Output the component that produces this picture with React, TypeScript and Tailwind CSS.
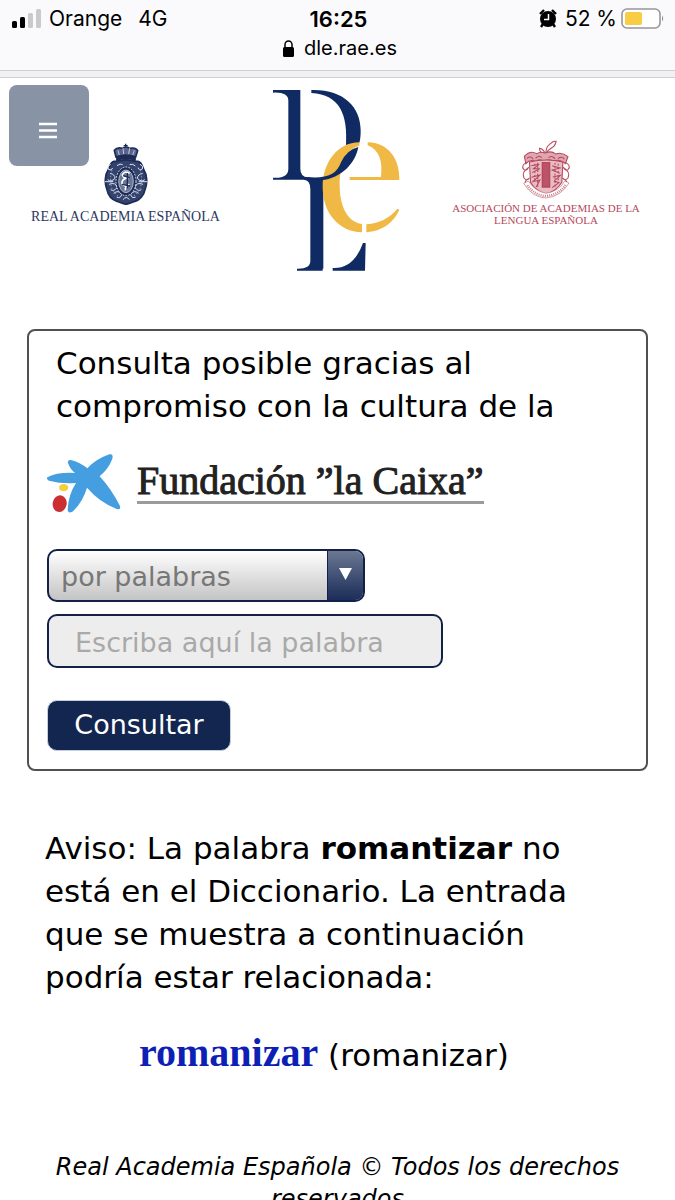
import { useState } from "react";

function StatusBar() {
  return (
    <div className="bg-[#fafafc] font-['Inter',sans-serif] text-black">
      <div className="grid h-9 grid-cols-3 items-center pl-3 pr-[10px] pt-[2px]">
        <div className="flex items-center">
          <svg className="mr-[7px]" width="30" height="20" viewBox="0 0 30 20" aria-hidden="true">
            <rect x="0" y="12" width="5" height="7" rx="1.5" fill="#000" />
            <rect x="8" y="8" width="5" height="11" rx="1.5" fill="#000" />
            <rect x="16" y="4" width="5" height="15" rx="1.5" fill="#cacacb" />
            <rect x="24" y="0" width="5" height="19" rx="1.5" fill="#cacacb" />
          </svg>
          <span className="text-[21px]">Orange</span>
          <span className="ml-4 text-[21px]">4G</span>
        </div>
        <span className="text-center text-[22px] font-semibold">16:25</span>
        <div className="flex items-center justify-end">
          <svg className="mr-2" width="18" height="20" viewBox="0 0 18 20" aria-hidden="true">
            <path d="M1 5 5 1M17 5 13 1M4 15l-2 3M14 15l2 3" stroke="#000" strokeWidth="2.4" />
            <circle cx="9" cy="10" r="8" fill="#000" />
            <path d="M9.500 5v5.500H5" stroke="#fff" strokeWidth="1.500" fill="none" />
          </svg>
          <span className="text-[21px]">52 %</span>
          <svg className="ml-1" width="44" height="22" viewBox="0 0 44 22" aria-hidden="true">
            <rect x="1" y="1" width="38" height="19" rx="5" fill="#fff" stroke="#97979b" strokeWidth="1.600" />
            <rect x="4" y="4" width="17" height="13" rx="2" fill="#f8cd45" />
            <path d="M41 7.500q2.500 3 0 6z" fill="#97979b" />
          </svg>
        </div>
      </div>
      <div className="flex h-[34px] items-start justify-center pl-1">
        <svg className="mr-2 mt-[3px]" width="14" height="19" viewBox="0 0 14 19" aria-hidden="true">
          <rect x="1" y="8" width="11" height="10" rx="1.500" fill="#000" />
          <path d="M3 9V5.500a3.500 3.500 0 0 1 7 0V9" stroke="#000" strokeWidth="1.500" fill="none" />
        </svg>
        <span className="text-[20px] leading-6">dle.rae.es</span>
      </div>
      <div className="h-2 border-y border-[#cfcfd4] bg-[#f1f1f4]" />
    </div>
  );
}

function RaeEmblem() {
  return (
    <svg width="44" height="62" viewBox="0 0 132 186" fill="none" stroke="#1d2b57" aria-hidden="true">
      <path d="M65 2v14M59 8h12" strokeWidth="4" />
      <path d="M36 42 31 22q8-10 24-6 10-8 22 0 18-4 24 7l-6 19q-30-8-59 0z" fill="#56638a" strokeWidth="5" />
      <path d="M38 41q28-10 56 0v12q-28-7-56 0z" fill="#1d2b57" strokeWidth="3" />
      <path d="M46 36 42 22M59 33l-2-18M74 33l3-18M86 36l5-14" stroke="#fff" strokeWidth="2" />
      <path d="M66 51c14 0 22 5 36 4 12 2 14 18 18 27 10 14 10 40 4 55-4 21-18 35-31 38-10 5-19 6-27 9-8-3-17-4-27-9-15-4-27-18-31-38-6-16-6-41 4-55 4-9 6-24 18-27 14 1 22-4 36-4z" fill="#34436e" strokeWidth="5" />
      <g stroke="#dfe3ee" strokeWidth="3">
        <path d="M20 64q-12 5-7 15 9 6 13-4M108 64q12 4 7 14-10 6-13-4" />
        <path d="M18 91q15 3 15 15-12 13-22 4M116 91q-15 3-16 15 12 13 22 4" />
        <path d="M15 124q21-8 24 10-10 13-19 6M117 124q-20-8-24 10 10 13 19 6" />
        <path d="M29 151q15-12 24 4-4 13-15 7M104 151q-15-12-24 4 4 13 15 7" />
        <path d="M39 68q10-8 17-3M77 65q10-4 17 4M57 170q10-13 19 0M3 116h25M104 116h26" />
      </g>
      <ellipse cx="66" cy="115" rx="30" ry="43" fill="#1d2b57" stroke="#e5e8f1" strokeWidth="3" strokeDasharray="5 4" />
      <ellipse cx="66" cy="115" rx="22" ry="34" fill="#6b7799" stroke="#dde1ec" strokeWidth="2" />
      <path d="M77 91q-17-9-22 5 4 12 18 8-21 4-19 18 7 12 22 2-13 6-12 18" stroke="#fff" strokeWidth="5" />
      <path d="M70 90v46M57 98l20 6M54 124l24 5" strokeWidth="4" />
      <path d="M24 81q-8 24-1 54 8 18 24 27M109 81q7 25 0 54-9 18-25 27" stroke="#a2abc4" strokeWidth="3" strokeDasharray="4 5" />
    </svg>
  );
}

function AsaleEmblem() {
  return (
    <svg width="54" height="60" viewBox="0 0 150 180" preserveAspectRatio="none" fill="none" stroke="#b4485c" aria-hidden="true">
      <path d="M75 38q0-18 10-25 11-12 18-9-2 14-13 20-10 6-13 15M72 39q-5-12-15-14 0 12 10 15" strokeWidth="3" />
      <path d="M15 49q16-20 34-8 11-8 24-2 17-8 29 3 17-7 34 8l-7 21q-17-16-31-7-17-10-27 0-15-9-25 0-16-7-27 7z" fill="#dfa6b0" strokeWidth="3" />
      <path d="M29 66q46-12 93 0l-3 61q-13 23-44 38-31-15-43-38z" fill="#e9bcc4" strokeWidth="3" />
      <path d="M65 68h20v73H65z" fill="#bc5368" strokeWidth="4" />
      <g strokeWidth="3">
        <path d="M22 55q12-9 17 3M46 55q11-12 17-2M82 53q12-8 18 4M108 56q12-9 18 2" />
        <path d="M34 77l22-4-16 13h18L36 98M35 112l23-7-19 20 19-5-10 21M92 77l22 7-22 6 22 10M94 111l21-5-17 17 13 5-19 15" />
        <path d="M44 71v54M52 68v74M100 68v72M109 71v55" strokeDasharray="6 5" />
        <path d="M21 67Q5 76 13 88q10 5 13-5-20 14-12 31 9 10 14 1-17 8-7 22M129 67q16 9 8 21-10 5-13-5 20 14 12 31-9 10-14 1 17 8 7 22" />
      </g>
      <path d="M13 130q24 43 62 44 41-4 64-45l-12-6q-15 30-52 37-33-8-49-37z" fill="#fff" strokeWidth="1.500" />
      <path d="M23 136q22 31 52 32 34-3 54-33" stroke="#c98592" strokeWidth="7" strokeDasharray="3 3" />
    </svg>
  );
}

function DleLogo() {
  return (
    <svg className="h-[200px] w-[160px] shrink-0" viewBox="0 0 480 600" role="img" aria-label="DLE">
      <g fill="#102a63">
        <path d="M45 30H127V266Q127 291 150 292Q177 298 196 300V566H194V572H117V566Q157 567 157 543V327Q157 300 137 299H45V293Q91 296 91 266V62Q91 36 45 38Z" />
        <path d="M160 30C254 27 308 79 308 151C308 173 306 183 303 191L264 195C270 106 246 43 160 39Z" />
        <path d="M323 489L321 572H224V564Q287 567 315 489Z" />
      </g>
      <path d="M304 187C239 187 194 248 194 320C194 398 242 455 312 457V432C265 425 245 374 245 315C245 251 267 207 304 197Z" fill="#f0b945" />
      <path d="M301 201C292 250 251 294 190 301Q160 302 145 291C202 296 235 287 249 247Q267 209 301 201Z" fill="#102a63" />
      <path d="M329 187C390 188 426 236 424 300H275V291H369C374 244 365 210 329 196ZM325 433Q386 427 418 386L424 390Q395 451 325 457Z" fill="#f0b945" />
    </svg>
  );
}

function SiteHeader() {
  return (
    <header className="relative flex h-[251px] items-start justify-between pl-[30px] pr-[37px] pt-[2px] font-['Liberation_Serif',serif]">
      <button
        type="button"
        aria-label="Menú"
        className="absolute left-[9px] top-[7px] flex h-[81px] w-20 items-center justify-center rounded-lg bg-[#8993a6] pt-[10px]"
      >
        <svg width="20" height="17" viewBox="0 0 20 17" stroke="#fff" strokeWidth="2.600" aria-hidden="true">
          <path d="M0 2h18M0 8.500h18M0 15h18" />
        </svg>
      </button>
      <a href="#rae" className="mt-[63px] flex w-[191px] flex-col items-center text-[#2c375f]">
        <RaeEmblem />
        <span className="mt-[2px] whitespace-nowrap text-[14px] leading-5">REAL ACADEMIA ESPAÑOLA</span>
      </a>
      <a href="#dle">
        <DleLogo />
      </a>
      <a href="#asale" className="mt-[60px] flex w-[184px] flex-col items-center text-[#b4485c]">
        <AsaleEmblem />
        <span className="mt-[2px] whitespace-nowrap text-center text-[11px] leading-3">
          ASOCIACIÓN DE ACADEMIAS DE LA
          <br />
          LENGUA ESPAÑOLA
        </span>
      </a>
    </header>
  );
}

function CaixaLogo() {
  return (
    <div className="mt-[26px] flex h-[62px] items-start">
      <svg className="mr-4 shrink-0" width="74" height="60" viewBox="0 0 222 180" aria-hidden="true">
        <path
          d="M1 70Q32 54 84 57Q69 45 63 27Q61 16 74 19Q98 25 121 43Q145 16 187 1Q200 -2 196 14Q185 44 158 67Q193 105 219 156Q222 169 209 165Q158 145 120 101Q106 147 76 173Q62 180 62 166Q64 122 87 87Q44 90 6 80Q-3 75 1 70Z"
          fill="#459ee0"
        />
        <ellipse cx="50" cy="101" rx="14" ry="11" fill="#f3cf3d" />
        <ellipse cx="38" cy="149" rx="21" ry="25" fill="#cc2f32" transform="rotate(12 38 149)" />
      </svg>
      <span className="border-b-[3px] border-[#9b9b9b] pt-[6px] font-['Liberation_Serif',serif] text-[40px] leading-[41px] text-[#222] [-webkit-text-stroke:1px_#222]">
        Fundación ”la Caixa”
      </span>
    </div>
  );
}

function SearchForm() {
  const [mode, setMode] = useState("palabras");
  const [word, setWord] = useState("");

  return (
    <form
      onSubmit={(e) => e.preventDefault()}
      className="mx-[27px] rounded-lg border-2 border-[#505052] px-[18px] pb-[18px] pt-[11px]"
    >
      <p className="pl-[9px] text-[31px] leading-[43px]">
        Consulta posible gracias al
        <br />
        compromiso con la cultura de la
      </p>
      <CaixaLogo />
      <div className="relative mt-[33px] w-[318px]">
        <select
          aria-label="Tipo de consulta"
          value={mode}
          onChange={(e) => setMode(e.target.value)}
          className="block h-[53px] w-full appearance-none rounded-[10px] border-2 border-[#13204a] bg-linear-to-b from-white to-[#c4c4c4] pl-3 pr-10 pt-1 text-[27px] text-[#777]"
        >
          <option value="palabras">por palabras</option>
          <option value="expresiones">por expresiones</option>
        </select>
        <span className="pointer-events-none absolute inset-y-[2px] right-[2px] flex w-9 justify-center rounded-r-lg border-l border-[#13204a] bg-linear-to-b from-[#6c7893] to-[#1c2d58] pt-[17px]">
          <svg width="13" height="12" viewBox="0 0 13 12" aria-hidden="true">
            <path d="M0 0h13L6.500 12z" fill="#fff" />
          </svg>
        </span>
      </div>
      <input
        type="text"
        aria-label="Palabra"
        value={word}
        onChange={(e) => setWord(e.target.value)}
        placeholder="Escriba aquí la palabra"
        className="mt-3 block h-[54px] w-[396px] max-w-full rounded-[10px] border-2 border-[#13204a] bg-[#ededed] px-[26px] pt-[2px] text-[27px] placeholder:text-[#a9a9a9]"
      />
      <button
        type="submit"
        className="mt-8 flex h-[51px] w-[184px] items-center justify-center rounded-[10px] border border-[#c5cde0] bg-[#13264f] text-[27px] text-white"
      >
        Consultar
      </button>
    </form>
  );
}

export default function App() {
  return (
    <div className="min-h-screen bg-white font-['DejaVu_Sans',sans-serif] text-black">
      <StatusBar />
      <SiteHeader />
      <main>
        <SearchForm />
        <p className="mt-14 px-[45px] text-[31px] leading-[43px]">
          Aviso: La palabra <strong>romantizar</strong> no
          <br />
          está en el Diccionario. La entrada
          <br />
          que se muestra a continuación
          <br />
          podría estar relacionada:
        </p>
        <p className="mt-[29px] pl-[139px] text-[31px] leading-[50px]">
          <a href="#romanizar" className="font-['Liberation_Serif',serif] text-[40px] font-bold text-[#0d1fb5]">
            romanizar
          </a>{" "}
          (romanizar)
        </p>
      </main>
      <footer className="mt-[71px] px-10 text-center text-[24px] italic leading-8">
        Real Academia Española © Todos los derechos reservados
      </footer>
    </div>
  );
}
